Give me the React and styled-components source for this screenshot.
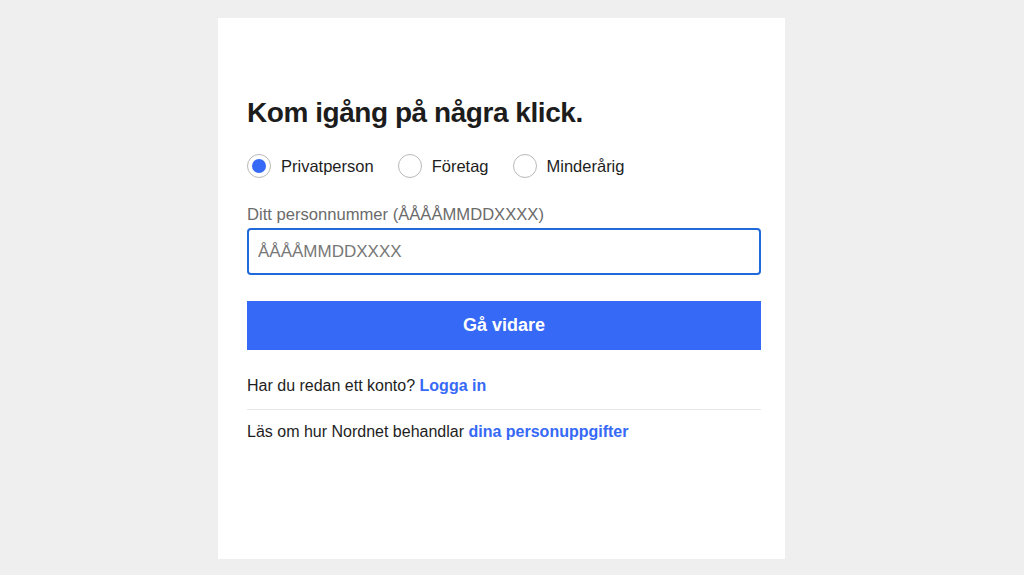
import styled, { createGlobalStyle } from 'styled-components'
import { useState } from 'react'

const Global = createGlobalStyle`
  body {
    margin: 0;
    background: #efefef;
    font-family: "Liberation Sans", Arial, sans-serif;
    color: #1e1e1e;
  }
`
const Page = styled.div`
  height: 575px;
  padding: 18px 0 0 218px;
  box-sizing: border-box;
  display: flex;
`
const Card = styled.div`
  width: 567px;
  height: 541px;
  background: #fff;
  box-sizing: border-box;
  padding: 81px 24px 0 29px;
`
const Title = styled.h1`
  margin: 0;
  font-size: 28px;
  font-weight: 700;
  letter-spacing: -0.45px;
  color: #1c1c1c;
  line-height: 1;
`
const Radios = styled.div`
  display: flex;
  gap: 24px;
  margin-top: 27px;
`
const RadioLabel = styled.label`
  display: flex;
  align-items: center;
  gap: 10px;
  font-size: 16.5px;
  color: #1e1e1e;
  cursor: pointer;
`
const Circle = styled.span`
  width: 24px;
  height: 24px;
  border-radius: 50%;
  border: 1px solid #b9b9b9;
  box-sizing: border-box;
  display: flex;
  align-items: center;
  justify-content: center;
  &::after {
    content: '';
    width: 14px;
    height: 14px;
    border-radius: 50%;
    background: ${p => (p.$on ? '#3669f5' : 'transparent')};
  }
`
const FieldLabel = styled.div`
  margin-top: 27px;
  font-size: 16.6px;
  line-height: 19px;
  color: #6b6b6b;
`
const Input = styled.input`
  display: block;
  margin-top: 4px;
  width: 514px;
  height: 47px;
  box-sizing: border-box;
  border: 2px solid #1f6ad8;
  border-radius: 4px;
  padding: 0 9px;
  font-family: inherit;
  font-size: 17px;
  outline: none;
  &::placeholder {
    color: #777;
  }
`
const Button = styled.button`
  display: block;
  margin-top: 26px;
  width: 514px;
  height: 49px;
  border: none;
  background: #3669f5;
  color: #fff;
  font-family: inherit;
  font-size: 18px;
  font-weight: 700;
  cursor: pointer;
`
const Line = styled.p`
  margin: 0;
  font-size: 16px;
  color: #1e1e1e;
  padding: ${p => p.$pad};
`
const Link = styled.a`
  color: #3669f5;
  font-weight: 700;
  text-decoration: none;
`
const Divider = styled.hr`
  width: 514px;
  margin: 0;
  border: none;
  border-top: 1px solid #e6e6e6;
`

const options = ['Privatperson', 'Företag', 'Minderårig']

const App = () => {
  const [type, setType] = useState('Privatperson')
  return (
    <>
      <Global />
      <Page>
        <Card>
          <Title>Kom igång på några klick.</Title>
          <Radios>
            {options.map(o => (
              <RadioLabel key={o} onClick={() => setType(o)}>
                <Circle $on={type === o} />
                {o}
              </RadioLabel>
            ))}
          </Radios>
          <FieldLabel>Ditt personnummer (ÅÅÅÅMMDDXXXX)</FieldLabel>
          <Input placeholder="ÅÅÅÅMMDDXXXX" />
          <Button>Gå vidare</Button>
          <Line $pad="27px 0 14px">
            Har du redan ett konto? <Link href="#">Logga in</Link>
          </Line>
          <Divider />
          <Line $pad="13px 0 0">
            Läs om hur Nordnet behandlar <Link href="#">dina personuppgifter</Link>
          </Line>
        </Card>
      </Page>
    </>
  )
}

export default App
